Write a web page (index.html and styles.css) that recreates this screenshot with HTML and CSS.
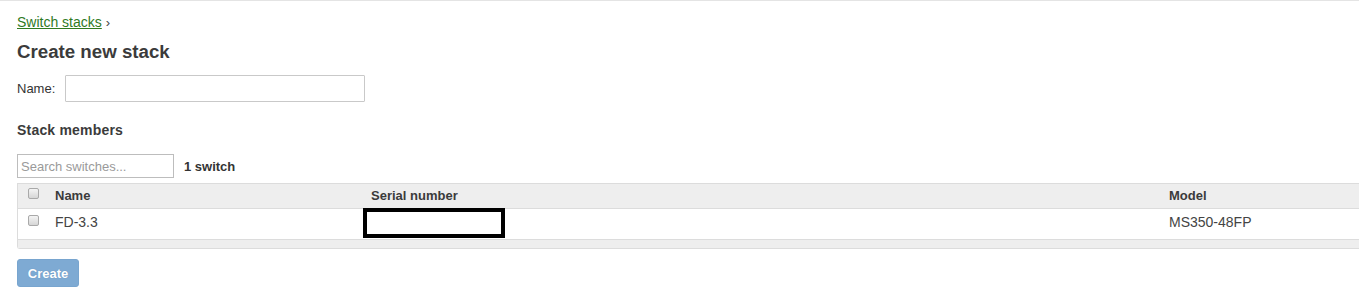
FILE: index.html
```html
<!DOCTYPE html>
<html lang="en">
<head>
<meta charset="utf-8">
<title>Create new stack</title>
<link rel="stylesheet" href="styles.css">
</head>
<body>
<div class="page">
  <div class="crumbs"><a href="#" class="crumb-link">Switch stacks</a> <span class="crumb-sep">›</span></div>
  <h1 class="title">Create new stack</h1>
  <div class="name-row">
    <label class="name-label" for="stack-name">Name:</label>
    <input class="name-input" id="stack-name" type="text">
  </div>
  <h2 class="section-title">Stack members</h2>
  <div class="search-row">
    <input class="search-input" type="text" placeholder="Search switches...">
    <span class="count">1 switch</span>
  </div>
  <div class="table">
    <div class="row head">
      <div class="cell cb-cell"><input type="checkbox" class="cb"></div>
      <div class="cell">Name</div>
      <div class="cell">Serial number</div>
      <div class="cell">Model</div>
    </div>
    <div class="row body-row">
      <div class="cell cb-cell"><input type="checkbox" class="cb"></div>
      <div class="cell">FD-3.3</div>
      <div class="cell redact-cell"><div class="redact"></div></div>
      <div class="cell">MS350-48FP</div>
    </div>
    <div class="table-foot"></div>
  </div>
  <button class="create-btn" type="button">Create</button>
</div>
</body>
</html>
```
FILE: styles.css
```css
html, body {
  margin: 0;
  padding: 0;
  background: #fff;
  overflow: hidden;
}

body {
  font-family: "Liberation Sans", Arial, Helvetica, sans-serif;
  color: #333;
  font-size: 13px;
  border-top: 1px solid #e4e4e4;
}

.page {
  padding: 13px 0 0 17px;
}

.crumbs {
  font-size: 14px;
  line-height: 17px;
  color: #444;
}

.crumb-link {
  color: #2f7a1f;
  text-decoration: underline;
}

.crumb-sep {
  font-size: 13px;
}

.title {
  margin: 10px 0 0;
  font-size: 18.7px;
  line-height: 22px;
  font-weight: bold;
  color: #3b3b3b;
}

.name-row {
  margin-top: 12px;
  display: flex;
  align-items: center;
  gap: 10px;
}

.name-label {
  font-size: 13px;
  color: #333;
}

.name-input {
  box-sizing: border-box;
  width: 300px;
  height: 27px;
  margin: 0;
  border: 1px solid #c9c9c9;
  border-radius: 1px;
  padding: 0 4px;
  font: 13px "Liberation Sans", Arial, sans-serif;
}

.section-title {
  margin: 20px 0 0;
  font-size: 14px;
  line-height: 17px;
  font-weight: bold;
  color: #3b3b3b;
  letter-spacing: 0.2px;
}

.search-row {
  margin-top: 15px;
  display: flex;
  align-items: center;
  gap: 10px;
}

.search-input {
  box-sizing: border-box;
  width: 157px;
  height: 24px;
  margin: 0;
  border: 1px solid #bdbdbd;
  padding: 0 3px;
  font: 13px "Liberation Sans", Arial, sans-serif;
  color: #333;
}

.search-input::placeholder {
  color: #9a9a9a;
}

.count {
  font-weight: bold;
  font-size: 13px;
  color: #333;
}

.table {
  margin-top: 5px;
  border: 1px solid #dcdcdc;
  border-right: none;
  border-radius: 0 0 0 3px;
}

.row {
  display: grid;
  grid-template-columns: 27px 316px 798px 1fr;
}

.head {
  background: #eeeeee;
  border-bottom: 1px solid #dcdcdc;
  height: 24px;
  font-weight: bold;
  color: #3b3b3b;
}

.head .cell {
  padding: 3px 10px 0;
  line-height: 18px;
}

.head .cb-cell {
  padding: 4px 0 0 10px;
}

.body-row {
  height: 30px;
  background: #fff;
  color: #444;
  font-size: 14px;
}

.body-row .cell {
  padding: 4px 10px 0;
  line-height: 18px;
}

.body-row .cb-cell {
  padding: 6px 0 0 10px;
}

.body-row .redact-cell {
  padding: 0 0 0 2px;
}

.redact {
  box-sizing: border-box;
  width: 142px;
  height: 30px;
  margin-top: -1px;
  border: 4px solid #000;
  background: #fff;
}

.cb {
  -webkit-appearance: none;
  appearance: none;
  box-sizing: border-box;
  width: 11px;
  height: 11px;
  margin: 0;
  border: 1px solid #a9a9a9;
  border-radius: 2px;
  background: linear-gradient(#f4f4f4, #d6d6d6);
  display: block;
}

.table-foot {
  height: 8px;
  background: #eeeeee;
  border-top: 1px solid #dcdcdc;
}

.create-btn {
  margin-top: 10px;
  box-sizing: border-box;
  width: 62px;
  height: 28px;
  padding: 0;
  border: 1px solid #78a5cf;
  border-radius: 3px;
  background: #7eaad3;
  color: #fff;
  font: bold 13px "Liberation Sans", Arial, sans-serif;
  text-shadow: 0 0 1px rgba(60, 100, 150, 0.4);
}
```
